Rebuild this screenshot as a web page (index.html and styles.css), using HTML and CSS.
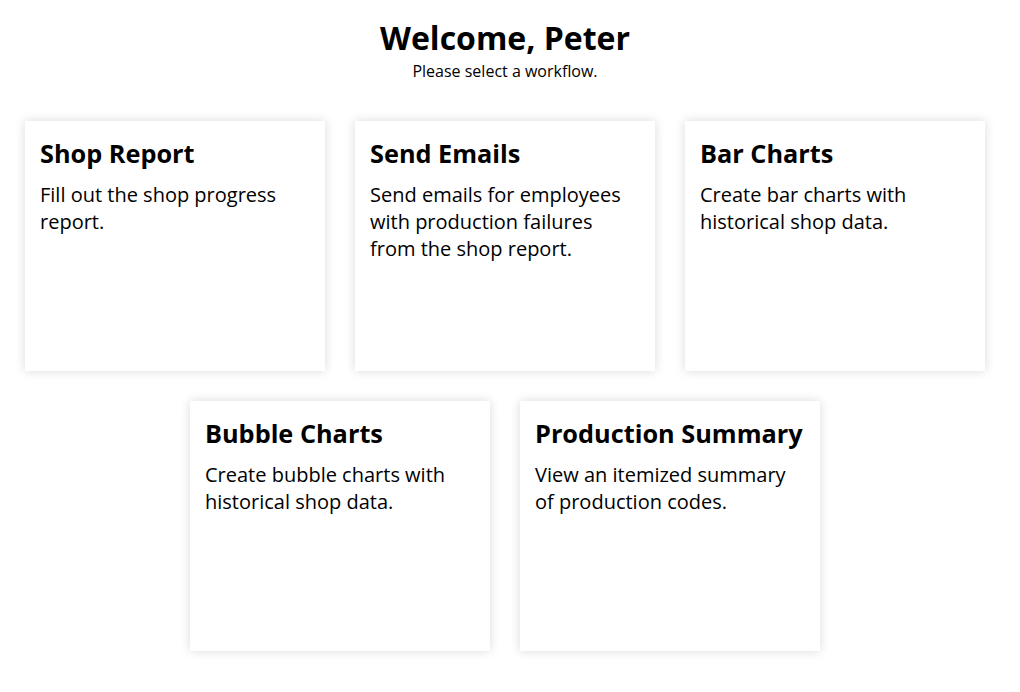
FILE: index.html
```html
<!DOCTYPE html>
<html>
<head>
<meta charset="utf-8">
<link rel="stylesheet" href="styles.css">
</head>
<body>
<main class="page">
  <header class="intro">
    <h1 class="title">Welcome, Peter</h1>
    <p class="subtitle">Please select a workflow.</p>
  </header>
  <section class="cards">
    <div class="card">
      <h2 class="card-title">Shop Report</h2>
      <p class="card-text">Fill out the shop progress report.</p>
    </div>
    <div class="card">
      <h2 class="card-title">Send Emails</h2>
      <p class="card-text">Send emails for employees with production failures from the shop report.</p>
    </div>
    <div class="card">
      <h2 class="card-title">Bar Charts</h2>
      <p class="card-text">Create bar charts with historical shop data.</p>
    </div>
    <div class="card">
      <h2 class="card-title">Bubble Charts</h2>
      <p class="card-text">Create bubble charts with historical shop data.</p>
    </div>
    <div class="card">
      <h2 class="card-title">Production Summary</h2>
      <p class="card-text">View an itemized summary of production codes.</p>
    </div>
  </section>
</main>
</body>
</html>
```
FILE: styles.css
```css
html, body {
  margin: 0;
  padding: 0;
  background: #fff;
}
body {
  font-family: "Open Sans", "Liberation Sans", sans-serif;
  color: #000;
}
.page {
  width: 1010px;
  padding-bottom: 41px;
}
.intro {
  text-align: center;
  padding-top: 16px;
}
.title {
  margin: 0;
  font-size: 32px;
  font-weight: 700;
  line-height: 44px;
}
.subtitle {
  margin: 0;
  font-size: 16px;
  line-height: 22px;
}
.cards {
  margin-top: 39px;
  display: flex;
  flex-wrap: wrap;
  justify-content: center;
  gap: 30px;
  padding: 0 25px;
}
.card {
  box-sizing: border-box;
  width: 300px;
  height: 250px;
  padding: 16px 15px;
  background: #fff;
  box-shadow: 0 0 10px rgba(0, 0, 0, 0.15);
}
.card-title {
  margin: 0;
  font-size: 25.3px;
  font-weight: 700;
  line-height: 33px;
}
.card-text {
  margin: 11px 0 0;
  font-size: 20px;
  line-height: 27px;
}
```
